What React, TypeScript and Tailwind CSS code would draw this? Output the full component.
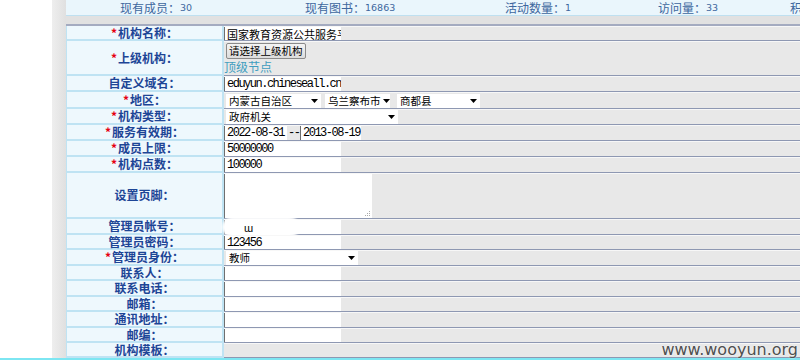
import React from "react";

const CJK = "font-['Noto_Sans_CJK_SC',sans-serif]";
const MONO = "font-['Liberation_Mono','Noto_Sans_CJK_SC',monospace] text-[12px] tracking-[-1.5px]";

function Row({
  label,
  req,
  h,
  children,
}: {
  label: string;
  req?: boolean;
  h: string;
  children?: React.ReactNode;
}) {
  return (
    <div className={`flex ${h}`}>
      <div className="w-[158px] shrink-0 bg-[#eef8fd] border-l border-r-2 border-b-2 border-[#bfe3f3] flex items-center justify-center text-[12px] leading-[12px] font-bold text-[#1d4596]">
        {req && <span className="text-[#e60012] mr-[1px]">*</span>}
        {label}
      </div>
      <div className="flex-1 bg-[#e8e8e8] border-t border-t-[#f7f7f7] border-b border-b-[#8e98b2] flex items-center relative">
        {children}
      </div>
    </div>
  );
}

function Input({ w, children, mono }: { w: string; children?: React.ReactNode; mono?: boolean }) {
  return (
    <div
      className={`${w} h-full bg-white border-l border-l-[#6f6f6f] flex items-center pl-[2px] overflow-hidden whitespace-nowrap ${
        mono ? MONO : "text-[11px]"
      } text-black leading-[12px]`}
    >
      {children}
    </div>
  );
}

function Select({ w, children }: { w: string; children?: React.ReactNode }) {
  return (
    <div
      className={`${w} h-[14px] bg-white flex items-center justify-between pl-[3px] pr-[3px] text-[10.5px] leading-[12px] text-black whitespace-nowrap`}
    >
      <span>{children}</span>
      <svg width="7" height="4" viewBox="0 0 7 4" className="shrink-0 ml-[2px]">
        <path d="M0 0 L7 0 L3.5 4 Z" fill="#000" />
      </svg>
    </div>
  );
}

const NUM = "font-['DejaVu_Sans',sans-serif] text-[9.5px] leading-[10px]";

export default function App() {
  return (
    <div className={`w-[800px] h-[360px] overflow-hidden relative flex flex-col bg-white ${CJK}`}>
      <div className="flex h-[358px]">
        <div className="w-[52px] bg-white" />
        <div className="w-[14px] bg-gradient-to-r from-[#eeeeee] to-[#e0e0e0]" />
        <div className="flex-1 flex flex-col bg-[#e1e1e1] min-w-0">
          {/* top stats bar */}
          <div className="h-[16px] bg-[#eaf6fc] border-b border-[#bfe0f0] flex items-center text-[12px] leading-[12px] text-[#3d679e] whitespace-nowrap">
            <div className="w-[54px] shrink-0" />
            <div className="w-[185px] shrink-0 flex items-center">
              现有成员：<span className={NUM}>30</span>
            </div>
            <div className="w-[200px] shrink-0 flex items-center">
              现有图书：<span className={NUM}>16863</span>
            </div>
            <div className="w-[153px] shrink-0 flex items-center">
              活动数量：<span className={NUM}>1</span>
            </div>
            <div className="w-[132px] shrink-0 flex items-center">
              访问量：<span className={NUM}>33</span>
            </div>
            <div className="shrink-0">积</div>
          </div>
          <div className="h-[8px]" />
          <div className="border-t-2 border-[#a4abc0] flex flex-col">
            <Row label="机构名称：" req h="h-[15px]">
              <Input w="w-[117px]">国家教育资源公共服务平台</Input>
            </Row>
            <Row label="上级机构：" req h="h-[35px]">
              <div className="flex flex-col items-start self-start pl-[2px] pt-[1px]">
                <div className="h-[16px] px-[2px] border border-[#8a8a8a] rounded-[2px] bg-gradient-to-b from-[#f4f4f4] to-[#dcdcdc] text-[10.5px] leading-[12px] text-black flex items-center">
                  请选择上级机构
                </div>
                <div className="text-[12px] leading-[16px] text-[#3f9dbf] -ml-[2px]">顶级节点</div>
              </div>
            </Row>
            <Row label="自定义域名：" h="h-[16px]">
              <Input w="w-[117px]" mono>
                eduyun.chineseall.cn
              </Input>
            </Row>
            <Row label="地区：" req h="h-[17px]">
              <div className="w-[2px]" />
              <Select w="w-[95px]">内蒙古自治区</Select>
              <div className="w-[4px]" />
              <Select w="w-[65px]">乌兰察布市</Select>
              <div className="w-[7px]" />
              <Select w="w-[83px]">商都县</Select>
            </Row>
            <Row label="机构类型：" req h="h-[16px]">
              <div className="w-[2px]" />
              <Select w="w-[172px]">政府机关</Select>
            </Row>
            <Row label="服务有效期：" req h="h-[16px]">
              <Input w="w-[63px]" mono>
                2022-08-31
              </Input>
              <span className={`${MONO} w-[13px] pl-[1px] text-black leading-[12px]`}>--</span>
              <Input w="w-[61px]" mono>
                2013-08-19
              </Input>
            </Row>
            <Row label="成员上限：" req h="h-[16px]">
              <Input w="w-[117px]" mono>
                50000000
              </Input>
            </Row>
            <Row label="机构点数：" req h="h-[16px]">
              <Input w="w-[117px]" mono>
                100000
              </Input>
            </Row>
            <Row label="设置页脚：" h="h-[46px]">
              <div className="w-[148px] h-full bg-white border-l border-l-[#6f6f6f] relative">
                <svg className="absolute right-[1px] bottom-[1px]" width="6" height="6" viewBox="0 0 6 6">
                  <rect x="4" y="0" width="1" height="1" fill="#aaa" />
                  <rect x="2" y="2" width="1" height="1" fill="#aaa" />
                  <rect x="4" y="2" width="1" height="1" fill="#aaa" />
                  <rect x="0" y="4" width="1" height="1" fill="#aaa" />
                  <rect x="2" y="4" width="1" height="1" fill="#aaa" />
                  <rect x="4" y="4" width="1" height="1" fill="#aaa" />
                </svg>
              </div>
            </Row>
            <Row label="管理员帐号：" h="h-[16px]">
              <Input w="w-[117px]" />
              <div className="absolute left-[-2px] top-[-3px] w-[78px] h-[20px] rounded-[10px] bg-white blur-[1px]" />
              <div className="absolute left-[20px] top-[1px] text-[11px] leading-[12px] text-black">ɯ</div>
            </Row>
            <Row label="管理员密码：" h="h-[15px]">
              <Input w="w-[117px]" mono>
                123456
              </Input>
            </Row>
            <Row label="管理员身份：" req h="h-[16px]">
              <div className="w-[2px]" />
              <Select w="w-[132px]">教师</Select>
            </Row>
            <Row label="联系人：" h="h-[15px]">
              <Input w="w-[117px]" />
            </Row>
            <Row label="联系电话：" h="h-[16px]">
              <Input w="w-[117px]" />
            </Row>
            <Row label="邮箱：" h="h-[15px]">
              <Input w="w-[117px]" />
            </Row>
            <Row label="通讯地址：" h="h-[16px]">
              <Input w="w-[117px]" />
            </Row>
            <Row label="邮编：" h="h-[15px]">
              <Input w="w-[117px]" />
            </Row>
            <Row label="机构模板：" h="h-[15px]" />
          </div>
        </div>
      </div>
      <div className="h-[2px] bg-[#7de6f2]" />
      <div className="absolute right-[2px] bottom-[2px] font-['DejaVu_Sans',sans-serif] text-[16px] leading-[16px] text-[#4f4f4f] [text-shadow:0_0_2px_#fff]">
        www.wooyun.org
      </div>
    </div>
  );
}
